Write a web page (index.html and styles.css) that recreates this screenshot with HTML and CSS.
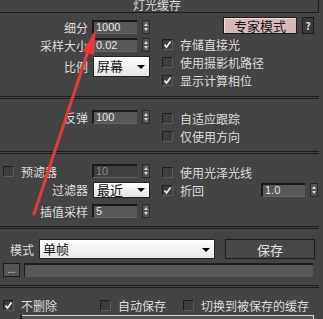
FILE: index.html
```html
<!DOCTYPE html>
<html lang="zh">
<head>
    <meta charset="UTF-8">
    <title>灯光缓存</title>
    <link rel="stylesheet" href="styles.css">
</head>
<body>

<div class="rollout-title"><span>灯光缓存</span></div>

<section class="group g1">
    <div class="col left">
        <div class="row">
            <span class="label">细分</span>
            <span class="num">1000</span><span class="spin"></span>
        </div>
        <div class="row">
            <span class="label">采样大小</span>
            <span class="num">0.02</span><span class="spin"></span>
        </div>
        <div class="row tall">
            <span class="label">比例</span>
            <span class="drop small">屏幕</span>
        </div>
    </div>
    <div class="col right">
        <div class="row btns">
            <span class="btn expert">专家模式</span>
            <span class="btn help">?</span>
        </div>
        <div class="row"><span class="check on"></span>存储直接光</div>
        <div class="row"><span class="check"></span>使用摄影机路径</div>
        <div class="row"><span class="check on"></span>显示计算相位</div>
    </div>
</section>

<div class="sep"></div>

<section class="group g2">
    <div class="col left">
        <div class="row">
            <span class="label">反弹</span>
            <span class="num">100</span><span class="spin"></span>
        </div>
    </div>
    <div class="col right">
        <div class="row"><span class="check"></span>自适应跟踪</div>
        <div class="row"><span class="check"></span>仅使用方向</div>
    </div>
</section>

<div class="sep"></div>

<section class="group g3">
    <div class="col left">
        <div class="row">
            <span class="label start"><span class="check"></span>预滤器</span>
            <span class="num off">10</span><span class="spin"></span>
        </div>
        <div class="row mid">
            <span class="label">过滤器</span>
            <span class="drop small">最近</span>
        </div>
        <div class="row gap">
            <span class="label">插值采样</span>
            <span class="num">5</span><span class="spin"></span>
        </div>
    </div>
    <div class="col right">
        <div class="row"><span class="check"></span>使用光泽光线</div>
        <div class="row">
            <span class="check on"></span><span class="grow">折回</span>
            <span class="num">1.0</span><span class="spin"></span>
        </div>
    </div>
</section>

<div class="sep"></div>

<section class="group g4">
    <div class="row mode">
        <span class="mode-label">模式</span>
        <span class="drop wide">单帧</span>
        <span class="btn save">保存</span>
    </div>
    <div class="row path">
        <span class="btn dots">...</span>
        <span class="bar"></span>
    </div>
</section>

<div class="sep"></div>

<section class="group g5">
    <div class="row opts">
        <span class="opt o1"><span class="check on"></span>不删除</span>
        <span class="opt o2"><span class="check"></span>自动保存</span>
        <span class="opt"><span class="check"></span>切换到被保存的缓存</span>
    </div>
    <div class="listbox"></div>
</section>

<svg class="arrow" width="323" height="319" viewBox="0 0 323 319">
    <line x1="34" y1="214" x2="90" y2="45" stroke="#e8383d" stroke-width="3" stroke-linecap="round"/>
    <polygon points="96,29 83,51 94,55" fill="#e8383d"/>
</svg>

</body>
</html>
```

FILE: styles.css
```css
body {
    margin: 0;
    width: 323px;
    height: 319px;
    overflow: hidden;
    position: relative;
    background-color: #444;
    color: #dcdcdc;
    font-family: "Noto Sans CJK SC", "Liberation Sans", sans-serif;
    font-size: 12px;
}
.rollout-title {
    box-sizing: border-box;
    width: 319px;
    height: 13px;
    border-right: 1px solid #1e1e1e;
    border-bottom: 1px solid #1e1e1e;
    text-align: center;
    line-height: 10px;
    padding-right: 4px;
    overflow: hidden;
}
.group {
    display: flex;
    width: 318px;
}
.sep {
    box-sizing: border-box;
    width: 319px;
    height: 3px;
    border-top: 1px solid #1c1c1c;
    border-bottom: 1px solid #1c1c1c;
}
.col.left {
    width: 162px;
}
.col.right {
    flex: 1;
}
.row {
    display: flex;
    align-items: center;
    height: 18px;
    white-space: nowrap;
}
.label {
    width: 88px;
    margin-right: 4px;
    text-align: right;
}
.label.start {
    display: flex;
    align-items: center;
    padding-left: 3px;
    box-sizing: border-box;
}
.num {
    box-sizing: border-box;
    width: 45px;
    height: 14px;
    background-color: #585858;
    border-top: 2px solid #1a1a1a;
    border-left: 2px solid #1a1a1a;
    border-bottom: 1px solid #666;
    padding-left: 2px;
    font-family: "Liberation Sans", sans-serif;
    font-size: 11px;
    line-height: 11px;
    color: #e6e6e6;
}
.num.off {
    background-color: #3f3f3f;
    color: #8a8a8a;
}
.spin {
    box-sizing: border-box;
    width: 8px;
    height: 14px;
    margin-left: 5px;
    background-color: #555;
    border: 1px solid #2a2a2a;
    position: relative;
}
.spin::before,
.spin::after {
    content: "";
    position: absolute;
    left: 1px;
    border-left: 2px solid transparent;
    border-right: 2px solid transparent;
}
.spin::before {
    top: 2px;
    border-bottom: 3px solid #d8d8d8;
}
.spin::after {
    bottom: 2px;
    border-top: 3px solid #d8d8d8;
}
.drop {
    box-sizing: border-box;
    height: 20px;
    background: linear-gradient(#ffffff, #e4e4e4);
    border: 1px solid #222;
    color: #111;
    padding-left: 3px;
    line-height: 18px;
    font-size: 13px;
    position: relative;
}
.drop::after {
    content: "";
    position: absolute;
    right: 4px;
    top: 8px;
    border-left: 4px solid transparent;
    border-right: 4px solid transparent;
    border-top: 4px solid #000;
}
.drop.small {
    width: 57px;
    margin-left: 1px;
}
.drop.wide {
    width: 176px;
}
.check {
    box-sizing: border-box;
    width: 11px;
    height: 11px;
    margin-right: 7px;
    background-color: #3e3e3e;
    border-top: 1px solid #1e1e1e;
    border-left: 1px solid #1e1e1e;
    border-right: 1px solid #5c5c5c;
    border-bottom: 1px solid #5c5c5c;
    flex: none;
}
.check.on {
    background: #3e3e3e url("data:image/svg+xml;utf8,<svg xmlns='http://www.w3.org/2000/svg' width='9' height='9'><path d='M1.5 4.5 L3.5 7 L7.5 1.5' fill='none' stroke='%23eeeeee' stroke-width='1.7'/></svg>") no-repeat center;
}
.btn {
    box-sizing: border-box;
    display: flex;
    align-items: center;
    justify-content: center;
    border: 1px solid #1c1c1c;
}
.btn.expert {
    width: 74px;
    height: 17px;
    margin-left: 61px;
    background-color: #d9b8ba;
    color: #151515;
    font-size: 13px;
    box-shadow: inset 1px 1px 0 #f0dcdc;
}
.btn.help {
    width: 12px;
    height: 17px;
    margin-left: 5px;
    background-color: #3a3a3a;
    color: #e0e0e0;
    font-size: 10px;
    font-weight: bold;
}
.btn.save {
    width: 90px;
    height: 20px;
    margin-left: 10px;
    background-color: #474747;
    color: #e0e0e0;
    font-size: 13px;
}
.btn.dots {
    width: 17px;
    height: 14px;
    margin-left: 3px;
    background-color: #555;
    color: #ccc;
    font-size: 9px;
    line-height: 8px;
    align-items: flex-end;
    padding-bottom: 2px;
}
.bar {
    box-sizing: border-box;
    width: 289px;
    height: 14px;
    margin-left: 4px;
    background-color: #575757;
    border-top: 2px solid #1e1e1e;
    border-left: 1px solid #1e1e1e;
}
.grow {
    flex: 1;
}
.g1 .left { padding-top: 5px; }
.g1 .right { padding-top: 4px; }
.g1 { height: 83px; }
.row.tall { height: 22px; margin-top: 1px; }
.row.btns { height: 17px; margin-bottom: 1px; }
.g1 .drop { height: 21px; }

.g2 { height: 52px; }
.g2 .left { padding-top: 9px; }
.g2 .right { padding-top: 10px; }

.g3 { height: 72px; }
.g3 .left { padding-top: 8px; }
.g3 .right { padding-top: 9px; }
.row.mid { height: 19px; }
.g3 .drop { height: 16px; line-height: 14px; }
.g3 .drop::after { top: 5px; }
.row.gap { margin-top: 3px; }
.g3 .right .num { width: 44px; }

.g4 {
    display: block;
    height: 56px;
    padding-top: 10px;
    box-sizing: border-box;
}
.row.mode { height: 20px; }
.mode-label {
    margin-left: 10px;
    margin-right: 5px;
}
.row.path { height: 14px; margin-top: 4px; }

.g5 {
    display: block;
    padding-top: 8px;
}
.opt {
    display: flex;
    align-items: center;
}
.opts { padding-left: 3px; }
.o1 { width: 97px; }
.o2 { width: 83px; }
.listbox {
    box-sizing: border-box;
    width: 292px;
    height: 10px;
    margin-left: 22px;
    margin-top: 1px;
    background-color: #555;
    border-top: 1px solid #d8d8d8;
    border-right: 1px solid #d8d8d8;
    box-shadow: -2px 0 0 #222;
}
.arrow {
    position: absolute;
    top: 0;
    left: 0;
    pointer-events: none;
}
```
